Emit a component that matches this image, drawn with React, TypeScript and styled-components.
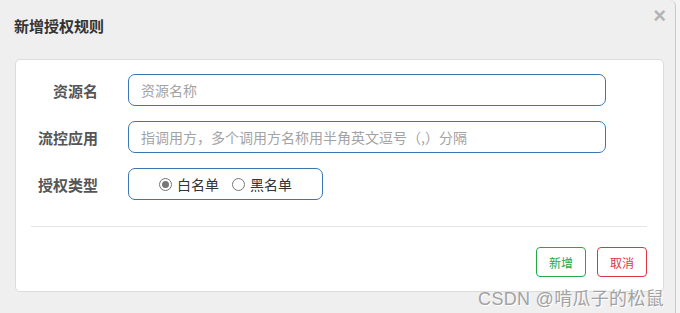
import React from 'react'
import styled, { createGlobalStyle } from 'styled-components'

const GlobalStyle = createGlobalStyle`
  html, body {
    margin: 0;
    padding: 0;
    background: #f4f4f4;
    font-family: "Noto Sans CJK SC", "Noto Sans", sans-serif;
  }
`;

const Dialog = styled.div`
  position: relative;
  box-sizing: border-box;
  width: 676px;
  height: 313px;
  background: #efefef;
  border-right: 1px solid #c9c9c9;
  border-top-right-radius: 6px;
  padding: 0 12px 0 15px;
`;

const Header = styled.div`
  display: flex;
  align-items: flex-start;
  height: 59px;
  margin-left: -1px;
  padding-top: 15px;
  box-sizing: border-box;
`;

const Title = styled.h4`
  margin: 0;
  font-size: 15px;
  font-weight: bold;
  color: #333;
  line-height: 22px;
`;

const CloseButton = styled.span`
  position: absolute;
  top: 3px;
  right: 9px;
  font-family: "Liberation Sans", Arial, sans-serif;
  font-size: 22px;
  font-weight: bold;
  color: #b4b4b4;
  cursor: pointer;
`;

const Panel = styled.div`
  box-sizing: border-box;
  width: 649px;
  height: 233px;
  background: #fff;
  border: 1px solid #dcdcdc;
  border-radius: 5px;
  padding: 14px 16px 0 0;
`;

const Row = styled.div`
  display: flex;
  align-items: center;
  height: 32px;
  margin-bottom: 15px;
`;

const Label = styled.label`
  width: 82px;
  margin-right: 30px;
  text-align: right;
  font-size: 15px;
  font-weight: bold;
  color: #555;
`;

const Input = styled.input`
  box-sizing: border-box;
  width: 478px;
  height: 32px;
  padding: 0 12px;
  border: 1px solid #3a77b0;
  border-radius: 7px;
  font-family: inherit;
  font-size: 14px;
  color: #555;
  outline: none;

  &::placeholder {
    color: #a3a3a3;
  }
`;

const RadioGroup = styled.div`
  box-sizing: border-box;
  width: 195px;
  height: 32px;
  border: 1px solid #3a77b0;
  border-radius: 7px;
  display: flex;
  align-items: center;
  justify-content: center;
  gap: 13px;
`;

const RadioOption = styled.label`
  display: flex;
  align-items: center;
  gap: 5px;
  font-size: 14px;
  color: #333;
`;

const RadioMark = styled.span<{ $checked?: boolean }>`
  box-sizing: border-box;
  width: 13px;
  height: 13px;
  border-radius: 50%;
  border: 1px solid #767676;
  background: #fff;
  display: flex;
  align-items: center;
  justify-content: center;

  &::after {
    content: '';
    width: 7px;
    height: 7px;
    border-radius: 50%;
    background: ${(p) => (p.$checked ? '#767676' : 'transparent')};
  }
`;

const Divider = styled.hr`
  margin: 26px 0 20px 15px;
  border: none;
  border-top: 1px solid #e5e5e5;
`;

const Footer = styled.div`
  display: flex;
  justify-content: flex-end;
  gap: 11px;
`;

const Button = styled.button<{ $color: string }>`
  box-sizing: border-box;
  width: 50px;
  height: 30px;
  background: #fff;
  border: 1px solid ${(p) => p.$color};
  border-radius: 4px;
  color: ${(p) => p.$color};
  font-family: inherit;
  font-size: 12px;
  cursor: pointer;
`;

const Watermark = styled.div`
  position: absolute;
  right: 11px;
  bottom: 3px;
  font-family: "Liberation Sans", "Noto Sans CJK SC", sans-serif;
  font-size: 18px;
  color: #a2a2a2;
  letter-spacing: 0.3px;
  text-shadow: 1px 1px 0 #fff;
  pointer-events: none;
`;

const App = () => {
  return (
    <>
      <GlobalStyle />
      <Dialog>
        <Header>
          <Title>新增授权规则</Title>
        </Header>
        <CloseButton>×</CloseButton>
        <Panel>
          <Row>
            <Label>资源名</Label>
            <Input type="text" placeholder="资源名称" />
          </Row>
          <Row>
            <Label>流控应用</Label>
            <Input
              type="text"
              placeholder="指调用方，多个调用方名称用半角英文逗号（,）分隔"
            />
          </Row>
          <Row>
            <Label>授权类型</Label>
            <RadioGroup>
              <RadioOption>
                <RadioMark $checked />
                白名单
              </RadioOption>
              <RadioOption>
                <RadioMark />
                黑名单
              </RadioOption>
            </RadioGroup>
          </Row>
          <Divider />
          <Footer>
            <Button $color="#28a745">新增</Button>
            <Button $color="#dc3545">取消</Button>
          </Footer>
        </Panel>
        <Watermark>CSDN @啃瓜子的松鼠</Watermark>
      </Dialog>
    </>
  )
}

export default App
